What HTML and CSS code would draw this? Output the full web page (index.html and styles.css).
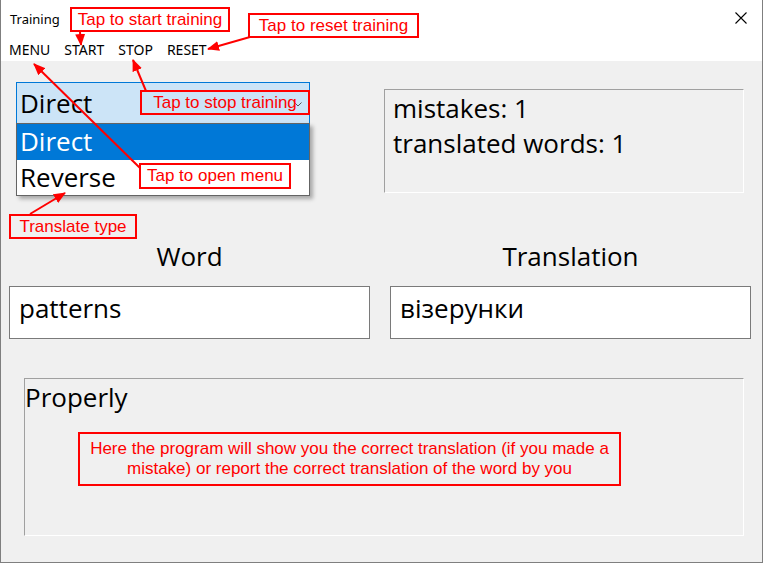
FILE: index.html
```html
<!DOCTYPE html>
<html>
<head>
<meta charset="utf-8">
<link rel="stylesheet" href="styles.css">
</head>
<body>
<div class="screen">
  <div class="window">
    <div class="titlebar">
      <span class="title">Training</span>
      <svg class="close" width="12" height="12" viewBox="0 0 12 12"><path d="M0.5 0.5 L11.5 11.5 M11.5 0.5 L0.5 11.5" stroke="#000" stroke-width="1.1" fill="none"/></svg>
    </div>
    <div class="menubar">
      <span>MENU</span><span>START</span><span>STOP</span><span>RESET</span>
    </div>
    <div class="content">
      <div class="top">
        <div class="combo">
          <span>Direct</span>
          <svg class="chev" width="8" height="5" viewBox="0 0 8 5"><path d="M0.5 0.5 L4 4 L7.5 0.5" stroke="#555" stroke-width="1" fill="none"/></svg>
        </div>
        <div class="stats">
          <div>mistakes: 1</div>
          <div>translated words: 1</div>
        </div>
      </div>
      <div class="fields">
        <div class="label">Word</div>
        <div class="label">Translation</div>
        <div class="input">patterns</div>
        <div class="input">візерунки</div>
      </div>
      <div class="properly">Properly</div>
    </div>
  </div>

  <div class="dropdown">
    <div class="opt selected">Direct</div>
    <div class="opt">Reverse</div>
  </div>

  <svg class="arrows" width="763" height="563" viewBox="0 0 763 563">
    <defs>
      <marker id="ah" markerUnits="userSpaceOnUse" markerWidth="12" markerHeight="10" refX="11" refY="5" orient="auto">
        <path d="M0 0 L12 5 L0 10 Z" fill="#ff0000"/>
      </marker>
    </defs>
    <g stroke="#ff0000" stroke-width="2" fill="none" marker-end="url(#ah)">
      <line x1="80" y1="32" x2="81" y2="45"/>
      <line x1="250" y1="37" x2="208" y2="49"/>
      <line x1="146" y1="91" x2="133" y2="60"/>
      <line x1="140" y1="168" x2="34" y2="64"/>
      <line x1="30" y1="214" x2="65" y2="193"/>
    </g>
  </svg>

  <div class="note n-start">Tap to start training</div>
  <div class="note n-reset">Tap to reset training</div>
  <div class="note n-stop">Tap to stop training</div>
  <div class="note n-menu">Tap to open menu</div>
  <div class="note n-type">Translate type</div>
  <div class="note n-info">Here the program will show you the correct translation (if you made a mistake) or report the correct translation of the word by you</div>
</div>
</body>
</html>
```
FILE: styles.css
```css
* { box-sizing: border-box; }
html, body { margin: 0; padding: 0; background: #f0f0f0; }

.screen {
  position: relative;
  width: 763px;
  height: 563px;
  overflow: hidden;
}

.window {
  width: 763px;
  height: 563px;
  background: #f0f0f0;
  border: 1px solid #7f7f7f;
  border-top: none;
  display: flex;
  flex-direction: column;
  font-family: "Open Sans", "Noto Sans", sans-serif;
  color: #000;
}

.titlebar {
  height: 37px;
  background: #fff;
  display: flex;
  align-items: center;
  justify-content: space-between;
  padding: 0 15px 0 9px;
}
.title {
  font-family: "Noto Sans", sans-serif;
  font-size: 13px;
}
.close { margin-top: -1px; }

.menubar {
  height: 24px;
  background: #fff;
  display: flex;
  align-items: center;
  gap: 14px;
  padding-left: 8px;
  font-family: "Noto Sans", sans-serif;
  font-size: 14px;
}

.content {
  flex: 1;
  font-size: 26px;
}

.top {
  display: flex;
  align-items: flex-start;
  padding: 21px 0 0 15px;
}

.combo {
  width: 294px;
  height: 42px;
  background: #cce4f7;
  border: 1px solid #0078d7;
  display: flex;
  align-items: center;
  justify-content: space-between;
  padding: 0 7px 0 3px;
  line-height: 40px;
}
.chev { margin-top: 2px; }

.stats {
  margin-left: 74px;
  margin-top: 7px;
  width: 360px;
  height: 104px;
  border-top: 1px solid #a0a0a0;
  border-left: 1px solid #a0a0a0;
  border-bottom: 1px solid #fff;
  border-right: 1px solid #fff;
  padding: 1px 8px;
  line-height: 35px;
}

.fields {
  display: grid;
  grid-template-columns: 361px 361px;
  column-gap: 20px;
  row-gap: 12px;
  padding-left: 8px;
  margin-top: 45px;
}
.label {
  text-align: center;
  line-height: 36px;
}
.input {
  height: 53px;
  background: #fff;
  border: 1px solid #7a7a7a;
  padding-left: 9px;
  line-height: 42px;
}

.properly {
  margin: 39px 0 0 23px;
  width: 720px;
  height: 158px;
  border-top: 1px solid #a0a0a0;
  border-left: 1px solid #a0a0a0;
  border-bottom: 1px solid #fff;
  border-right: 1px solid #fff;
  line-height: 36px;
}

.dropdown {
  position: absolute;
  left: 16px;
  top: 123px;
  width: 294px;
  height: 73px;
  background: #fff;
  border: 1px solid #646464;
  box-shadow: 3px 3px 4px rgba(0, 0, 0, 0.3);
  font-family: "Open Sans", "Noto Sans", sans-serif;
  font-size: 26px;
}
.opt {
  height: 35.5px;
  line-height: 35px;
  padding-left: 3px;
}
.opt.selected {
  background: #0078d7;
  color: #fff;
}

.arrows {
  position: absolute;
  left: 0;
  top: 0;
  pointer-events: none;
}

.note {
  position: absolute;
  border: 2px solid #ff0000;
  color: #ff0000;
  font-family: "Liberation Sans", Arial, sans-serif;
  font-size: 17px;
  text-align: center;
  line-height: 21px;
  white-space: nowrap;
}
.n-start { left: 70px; top: 7px; width: 160px; height: 25px; }
.n-reset { left: 248px; top: 13px; width: 171px; height: 25px; }
.n-stop { left: 140px; top: 90px; width: 170px; height: 25px; }
.n-menu { left: 139px; top: 163px; width: 152px; height: 26px; line-height: 22px; }
.n-type { left: 9px; top: 214px; width: 128px; height: 25px; }
.n-info {
  left: 78px;
  top: 432px;
  width: 543px;
  height: 54px;
  white-space: normal;
  font-family: "Liberation Sans", Arial, sans-serif;
  font-size: 17px;
  line-height: 20px;
  padding: 5px 8px 0;
}
```
